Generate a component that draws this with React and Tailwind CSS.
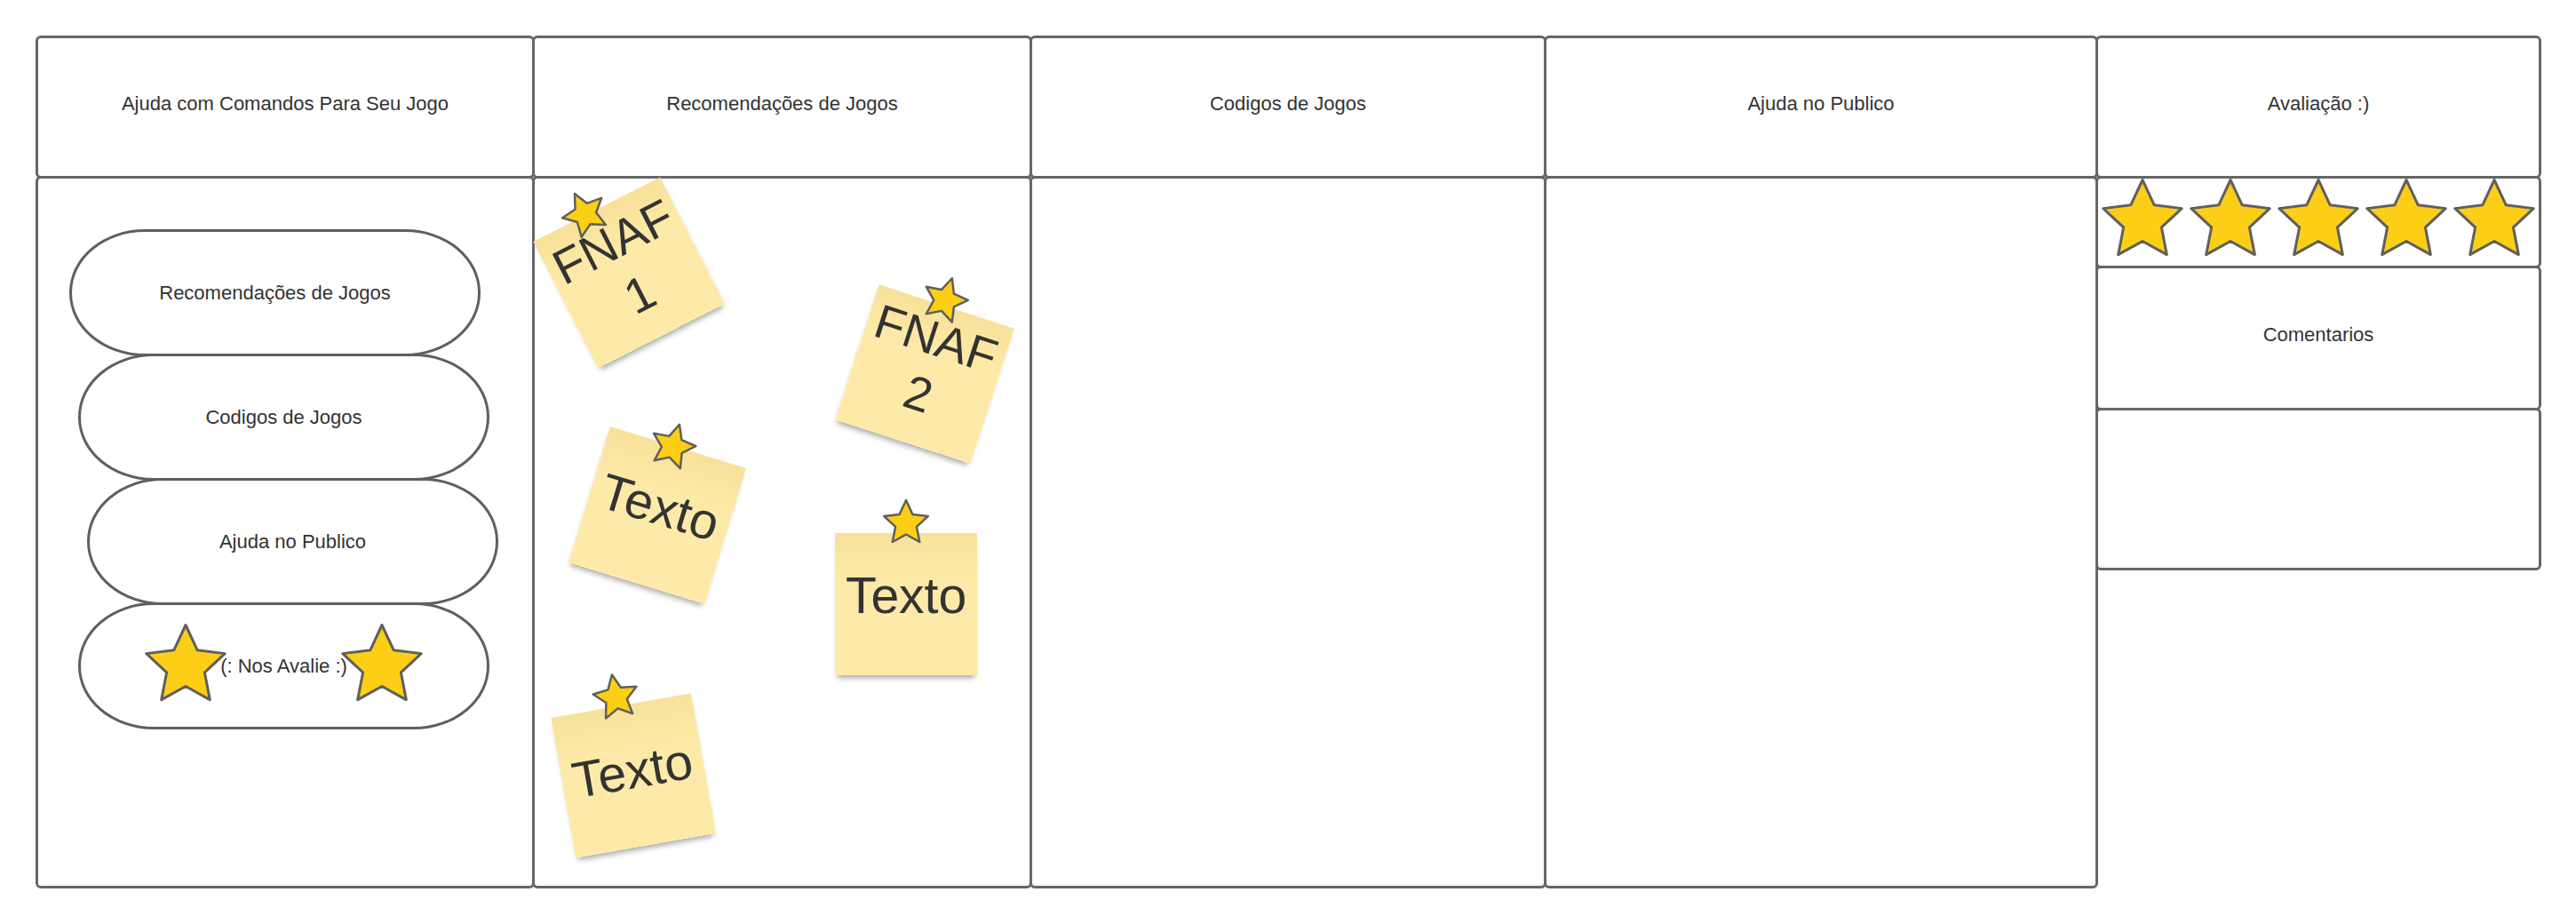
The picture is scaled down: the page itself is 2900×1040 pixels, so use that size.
import React from "react";

function starPoints(cx, cy, R, r) {
  const pts = [];
  for (let k = 0; k < 10; k++) {
    const a = ((-90 + k * 36) * Math.PI) / 180;
    const rad = k % 2 === 0 ? R : r;
    pts.push(`${(cx + rad * Math.cos(a)).toFixed(2)},${(cy + rad * Math.sin(a)).toFixed(2)}`);
  }
  return pts.join(" ");
}

function BigStar() {
  return (
    <svg width="94" height="90" viewBox="0 0 94 90" className="block">
      <polygon
        points={starPoints(47, 48, 46.5, 22.5)}
        fill="#fccf16"
        stroke="#5f5f5f"
        strokeWidth="3"
        strokeLinejoin="round"
      />
    </svg>
  );
}

function PinStar() {
  return (
    <svg width="56" height="54" viewBox="0 0 56 54" className="block">
      <polygon
        points={starPoints(28, 28, 26, 12.5)}
        fill="#fccf16"
        stroke="#5f5f5f"
        strokeWidth="2.5"
        strokeLinejoin="round"
      />
    </svg>
  );
}

function Note({ className, textClass, pinClass, children }) {
  return (
    <div className={`absolute w-[160px] h-[160px] ${className}`}>
      <div className="relative w-full h-full bg-linear-to-b from-[#f7e19a] to-[#feeaa8] to-35% shadow-[0_6px_6px_-3px_rgba(0,0,0,0.35)] flex items-center justify-center text-center text-[#333333]">
        <div className={textClass}>{children}</div>
        <div className={`absolute ${pinClass}`}>
          <PinStar />
        </div>
      </div>
    </div>
  );
}

function Header({ children }) {
  return (
    <div className="h-[161px] border-[3px] border-[#666666] rounded-[6px] flex items-center justify-center pb-2 text-[22px] text-[#333333]">
      {children}
    </div>
  );
}

function Pill({ className, children, stars }) {
  return (
    <div
      className={`relative -mt-[3px] w-[463px] h-[143px] border-[3px] border-[#5f5f5f] rounded-[85px/71px] flex items-center justify-center text-[22px] text-[#333333] ${className}`}
    >
      {stars && (
        <div className="absolute left-[71px] top-[21px]">
          <BigStar />
        </div>
      )}
      {stars && (
        <div className="absolute left-[292px] top-[21px]">
          <BigStar />
        </div>
      )}
      <span className="relative z-10">{children}</span>
    </div>
  );
}

export default function App() {
  return (
    <div className="w-[2900px] h-[1040px] bg-white pl-[40px] pt-[40px] flex items-start font-['Liberation_Sans',Arial,sans-serif]">
      {/* Column 1 */}
      <div className="w-[562px] flex flex-col">
        <Header>Ajuda com Comandos Para Seu Jogo</Header>
        <div className="-mt-[3px] h-[802px] border-[3px] border-[#666666] rounded-[6px] flex flex-col pt-[60px]">
          <Pill className="ml-[35px]">Recomendações de Jogos</Pill>
          <Pill className="ml-[45px]">Codigos de Jogos</Pill>
          <Pill className="ml-[55px]">Ajuda no Publico</Pill>
          <Pill className="ml-[45px]" stars>
            (: Nos Avalie :)
          </Pill>
        </div>
      </div>

      {/* Column 2 */}
      <div className="-ml-[3px] w-[563px] flex flex-col">
        <Header>Recomendações de Jogos</Header>
        <div className="relative -mt-[3px] h-[802px] border-[3px] border-[#666666] rounded-[6px]">
          <Note
            className="left-[26px] top-[26px] rotate-[-27deg]"
            textClass="text-[55px] leading-[1.2] pb-[12px]"
            pinClass="left-[38px] top-[-29px]"
          >
            FNAF
            <br />1
          </Note>
          <Note
            className="left-[359px] top-[140px] rotate-[18deg]"
            textClass="text-[54px] leading-[1.2] pb-[18px]"
            pinClass="left-[48px] top-[-34px]"
          >
            FNAF
            <br />2
          </Note>
          <Note
            className="left-[58px] top-[299px] rotate-[17deg]"
            textClass="text-[57px] leading-[1] pb-[20px]"
            pinClass="left-[46px] top-[-27px]"
          >
            Texto
          </Note>
          <Note
            className="left-[338px] top-[399px]"
            textClass="text-[57px] leading-[1] pb-[19px]"
            pinClass="left-[52px] top-[-39px]"
          >
            Texto
          </Note>
          <Note
            className="left-[31px] top-[592px] rotate-[-10deg]"
            textClass="text-[57px] leading-[1] pb-[12px]"
            pinClass="left-[48px] top-[-38px]"
          >
            Texto
          </Note>
        </div>
      </div>

      {/* Column 3 */}
      <div className="-ml-[3px] w-[582px] flex flex-col">
        <Header>Codigos de Jogos</Header>
        <div className="-mt-[3px] h-[802px] border-[3px] border-[#666666] rounded-[6px]" />
      </div>

      {/* Column 4 */}
      <div className="-ml-[3px] w-[624px] flex flex-col">
        <Header>Ajuda no Publico</Header>
        <div className="-mt-[3px] h-[802px] border-[3px] border-[#666666] rounded-[6px]" />
      </div>

      {/* Column 5 */}
      <div className="-ml-[3px] w-[502px] flex flex-col">
        <Header>Avaliação :)</Header>
        <div className="-mt-[3px] h-[104px] border-[3px] border-[#666666] rounded-[6px] grid grid-cols-5 items-start justify-items-center">
          <BigStar />
          <BigStar />
          <BigStar />
          <BigStar />
          <BigStar />
        </div>
        <div className="-mt-[3px] h-[163px] border-[3px] border-[#666666] rounded-[6px] flex items-center justify-center pb-2 text-[22px] text-[#333333]">
          Comentarios
        </div>
        <div className="-mt-[3px] h-[183px] border-[3px] border-[#666666] rounded-[6px]" />
      </div>
    </div>
  );
}
